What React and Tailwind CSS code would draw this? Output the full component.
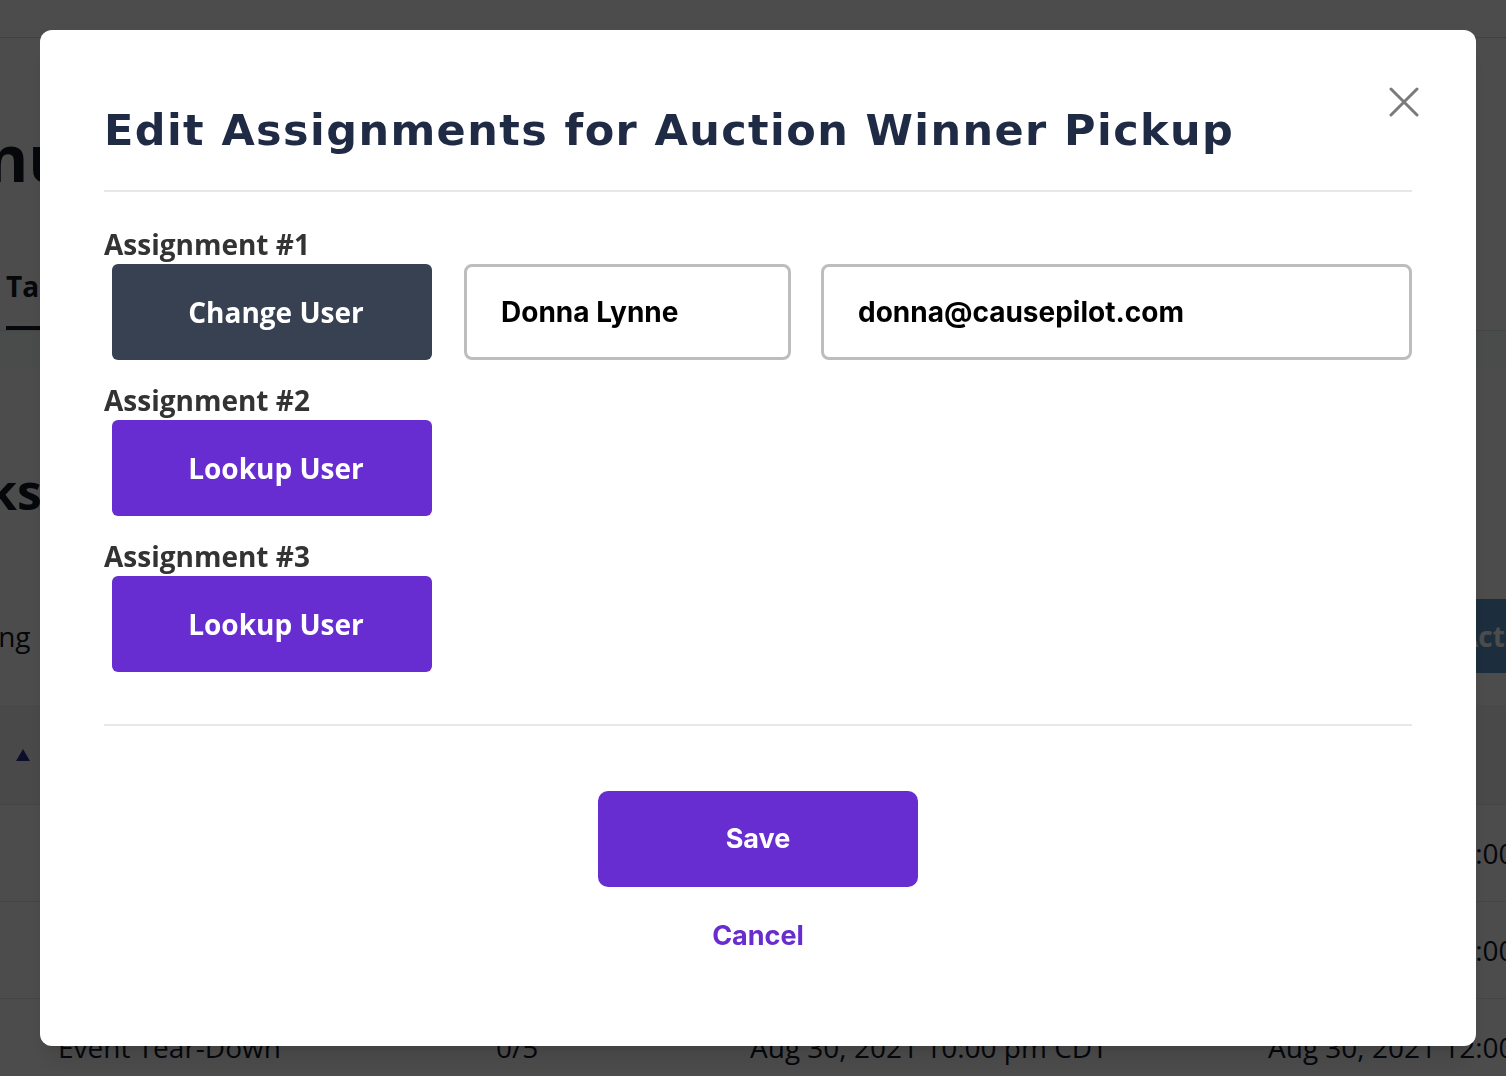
import React from "react";

const rows = [
  { name: "", count: "", start: "", end: "Aug 30, 2021 12:00 pm CDT" },
  { name: "", count: "", start: "", end: "Aug 30, 2021 12:00 pm CDT" },
  { name: "Event Tear-Down", count: "0/5", start: "Aug 30, 2021 10:00 pm CDT", end: "Aug 30, 2021 12:00 pm CDT" },
];

const assignments = [
  { label: "Assignment #1", user: { name: "Donna Lynne", email: "donna@causepilot.com" } },
  { label: "Assignment #2", user: null },
  { label: "Assignment #3", user: null },
];

const BackgroundPage = () => {
  return (
    <div className="bg-white text-[#111827] font-['Open_Sans',sans-serif]">
      <div className="h-[38px] border-b border-[#d1d5db]" />
      <h1 className="mt-[82px] -ml-[112px] text-[64px] font-bold leading-[76px] whitespace-nowrap">Menu</h1>

      <div className="mt-[70px] flex border-b border-[#e5e7eb]">
        <div className="ml-[6px] pb-[20px] border-b-4 border-[#111827] text-[28px] font-bold leading-[40px]">
          Tasks
        </div>
      </div>
      <div className="h-[38px] bg-[#f9fafb]" />

      <h2 className="mt-[92px] -ml-[98px] text-[50px] font-bold leading-[60px]">Tasks</h2>

      <div className="mt-[78px] flex items-center justify-between">
        <span className="-ml-[80px] text-[28px] leading-[40px]">Showing</span>
        <div className="mr-[-100px] h-[74px] px-[43px] flex items-center bg-[#5e9acb] text-white text-[28px] font-bold">
          Actions
        </div>
      </div>

      <div className="mt-[32px] h-[100px] flex items-center bg-[#f3f4f6] border-b border-[#e5e7eb]">
        <svg className="ml-[16px]" width="14" height="12" viewBox="0 0 14 12">
          <path d="M7 0 L14 12 L0 12 Z" fill="#2c3190" />
        </svg>
      </div>

      {rows.map((row, index) => (
        <div
          key={index}
          className="h-[97px] grid grid-cols-[438px_254px_518px_auto] pl-[58px] items-center border-b border-[#e5e7eb] text-[28px] leading-[40px] whitespace-nowrap overflow-hidden"
        >
          <span>{row.name}</span>
          <span>{row.count}</span>
          <span>{row.start}</span>
          <span>{row.end}</span>
        </div>
      ))}
    </div>
  );
};

const CloseIcon = () => (
  <svg width="30" height="30" viewBox="0 0 30 30" fill="none">
    <path d="M2 2 L28 28 M28 2 L2 28" stroke="#7a7a7a" strokeWidth="3" strokeLinecap="round" />
  </svg>
);

const AssignmentModal = () => {
  return (
    <div className="fixed inset-0 bg-black/70 pl-[40px] pt-[30px]">
      <div className="relative w-[1436px] h-[1016px] bg-white rounded-[12px] shadow-xl px-[64px]">
        <button className="absolute right-[57px] top-[57px]">
          <CloseIcon />
        </button>

        <div className="pt-[70px] pb-[30px] border-b-2 border-[#e5e7eb]">
          <h2 className="font-['DejaVu_Sans',sans-serif] text-[43px] font-bold leading-[60px] tracking-[1.4px] text-[#1f2a44] whitespace-nowrap">
            Edit Assignments for Auction Winner Pickup
          </h2>
        </div>

        <div className="pt-[36px] pb-[52px] border-b-2 border-[#e5e7eb] flex flex-col gap-[24px]">
          {assignments.map((item) => (
            <div key={item.label}>
              <div className="mb-[4px] font-['Open_Sans',sans-serif] text-[28px] font-bold leading-[32px] text-[#333333]">
                {item.label}
              </div>
              <div className="flex items-center">
                <button
                  className={`ml-2 w-[320px] h-[96px] pl-2 rounded-[6px] text-white font-['Open_Sans',sans-serif] text-[28px] font-bold ${
                    item.user ? "bg-[#374151]" : "bg-[#672dd0]"
                  }`}
                >
                  {item.user ? "Change User" : "Lookup User"}
                </button>
                {item.user && (
                  <>
                    <div className="ml-[32px] w-[327px] h-[96px] flex items-center pl-[34px] border-[3px] border-[#bdbdbd] rounded-[8px] font-['Inter',sans-serif] text-[28px] font-bold text-black">
                      {item.user.name}
                    </div>
                    <div className="ml-[30px] flex-1 h-[96px] flex items-center pl-[34px] border-[3px] border-[#bdbdbd] rounded-[8px] font-['Inter',sans-serif] text-[28px] font-bold text-black">
                      {item.user.email}
                    </div>
                  </>
                )}
              </div>
            </div>
          ))}
        </div>

        <div className="pt-[65px] flex flex-col items-center font-['Inter',sans-serif]">
          <button className="w-[320px] h-[96px] rounded-[10px] bg-[#672dd0] text-white text-[27px] font-bold">
            Save
          </button>
          <button className="mt-[31px] text-[27px] font-bold leading-[36px] text-[#672dd0]">Cancel</button>
        </div>
      </div>
    </div>
  );
};

const App = () => {
  return (
    <div className="relative h-screen overflow-hidden">
      <BackgroundPage />
      <AssignmentModal />
    </div>
  );
};

export default App;
